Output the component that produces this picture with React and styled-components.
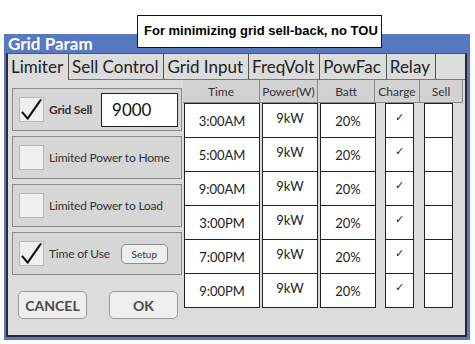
import React from "react";
import styled, { createGlobalStyle } from "styled-components";

const GlobalStyle = createGlobalStyle`
  html, body { margin: 0; padding: 0; background: #ffffff; }
  body { font-family: Lato, "Open Sans", sans-serif; }
`;

const tabs = ["Limiter", "Sell Control", "Grid Input", "FreqVolt", "PowFac", "Relay", ""];

const rows = [
  { time: "3:00AM", power: "9kW", batt: "20%" },
  { time: "5:00AM", power: "9kW", batt: "20%" },
  { time: "9:00AM", power: "9kW", batt: "20%" },
  { time: "3:00PM", power: "9kW", batt: "20%" },
  { time: "7:00PM", power: "9kW", batt: "20%" },
  { time: "9:00PM", power: "9kW", batt: "20%" },
];

const Tick = () => (
  <svg width="24" height="24" viewBox="0 0 24 24">
    <polyline points="2,15 8,22 22,2" fill="none" stroke="#111" strokeWidth="2.2" />
  </svg>
);

const App = () => {
  return (
    <Page>
      <GlobalStyle />
      <Note>For minimizing grid sell-back, no TOU</Note>
      <Window>
        <TitleBar>Grid Param</TitleBar>
        <Content>
          <TabRow>
            {tabs.map((t, i) => (
              <Tab key={i} active={i === 0} grow={t === ""}>
                {t}
              </Tab>
            ))}
          </TabRow>
          <Body>
            <LeftCol>
              <Group>
                <CheckBox><Tick /></CheckBox>
                <SmallLabel bold>Grid Sell</SmallLabel>
                <ValueBox>9000</ValueBox>
              </Group>
              <Group>
                <CheckBox />
                <SmallLabel>Limited Power to Home</SmallLabel>
              </Group>
              <Group>
                <CheckBox />
                <SmallLabel>Limited Power to Load</SmallLabel>
              </Group>
              <Group>
                <CheckBox><Tick /></CheckBox>
                <SmallLabel>Time of Use</SmallLabel>
                <SetupButton>Setup</SetupButton>
              </Group>
              <ButtonRow>
                <DialogButton>CANCEL</DialogButton>
                <DialogButton>OK</DialogButton>
              </ButtonRow>
            </LeftCol>
            <Table>
              <Head>Time</Head>
              <Head>Power(W)</Head>
              <Head>Batt</Head>
              <Head>Charge</Head>
              <Head>Sell</Head>
              {rows.map((r, i) => (
                <React.Fragment key={i}>
                  <Cell kind="time">{r.time}</Cell>
                  <Cell kind="power">{r.power}</Cell>
                  <Cell kind="batt">{r.batt}</Cell>
                  <Cell kind="charge">✓</Cell>
                  <Cell kind="sell" />
                </React.Fragment>
              ))}
            </Table>
          </Body>
        </Content>
      </Window>
    </Page>
  );
};

const Page = styled.div`
  position: relative;
  width: 475px;
  height: 344px;
  padding: 34px 0 0 4px;
  box-sizing: border-box;
`;

const Note = styled.div`
  position: absolute;
  left: 137px;
  top: 15px;
  width: 245px;
  height: 33px;
  box-sizing: border-box;
  background: #ffffff;
  border: 1.5px solid #111;
  font-family: "Liberation Sans", Arial, sans-serif;
  font-weight: bold;
  font-size: 13px;
  color: #000;
  white-space: nowrap;
  display: flex;
  align-items: center;
  padding: 0 0 2px 6px;
  z-index: 2;
`;

const Window = styled.div`
  width: 466px;
  height: 306px;
  background: #5878c2;
  display: flex;
  flex-direction: column;
`;

const TitleBar = styled.div`
  height: 19px;
  padding-left: 4px;
  color: #ffffff;
  font-weight: bold;
  font-size: 17px;
  line-height: 20px;
`;

const Content = styled.div`
  flex: 1;
  margin: 0 3px 3px 2px;
  background: #dcdcdc;
  border: 2px solid #2a2a2a;
  border-top: 1px solid #555;
  display: flex;
  flex-direction: column;
`;

const TabRow = styled.div`
  display: flex;
  height: 26px;
`;

const Tab = styled.div`
  flex: ${(p) => (p.grow ? 1 : "none")};
  padding: 0 5px 0 3px;
  font-size: 17px;
  line-height: 25px;
  color: #222;
  border-right: 1px solid #555;
  border-bottom: ${(p) => (p.active ? "none" : "1px solid #777")};
  &:last-child { border-right: none; }
`;

const Body = styled.div`
  display: flex;
  padding: 0 0 0 4px;
`;

const LeftCol = styled.div`
  width: 170px;
  padding-top: 8px;
  display: flex;
  flex-direction: column;
  gap: 5px;
`;

const Group = styled.div`
  height: 43px;
  box-sizing: border-box;
  border: 1px solid #8a8a8a;
  background: #d6d6d6;
  display: flex;
  align-items: center;
  padding-left: 6px;
  gap: 5px;
`;

const CheckBox = styled.div`
  width: 25px;
  height: 25px;
  box-sizing: border-box;
  background: #efefef;
  border: 1px solid #b8b8b8;
  display: flex;
  align-items: flex-end;
  justify-content: center;
`;

const SmallLabel = styled.span`
  font-size: 12px;
  font-weight: ${(p) => (p.bold ? "bold" : "normal")};
  color: #333;
  letter-spacing: -0.2px;
  white-space: nowrap;
`;

const ValueBox = styled.div`
  margin-left: 4px;
  width: 77px;
  height: 34px;
  box-sizing: border-box;
  background: #fff;
  border: 1.5px solid #222;
  font-size: 17px;
  color: #111;
  padding: 5px 0 0 10px;
`;

const SetupButton = styled.div`
  margin-left: 6px;
  width: 47px;
  height: 20px;
  box-sizing: border-box;
  border: 1px solid #8a8a8a;
  border-radius: 5px;
  background: #efefef;
  font-size: 10px;
  color: #333;
  display: flex;
  align-items: center;
  justify-content: center;
`;

const ButtonRow = styled.div`
  display: flex;
  justify-content: space-between;
  padding: 11px 4px 0 6px;
`;

const DialogButton = styled.div`
  width: 69px;
  height: 28px;
  box-sizing: border-box;
  border: 1px solid #9a9a9a;
  border-radius: 5px;
  background: #efefef;
  font-size: 14px;
  font-weight: bold;
  color: #4a4a4a;
  display: flex;
  align-items: center;
  justify-content: center;
`;

const Table = styled.div`
  display: grid;
  grid-template-columns: 77px 58px 57px 45px 43px;
  grid-template-rows: 23px repeat(6, 34px);
  align-content: start;
  margin-left: 1px;
`;

const Head = styled.div`
  background: #d2d2d2;
  border-right: 1px solid #888;
  border-bottom: 1px solid #888;
  font-size: 12px;
  color: #333;
  display: flex;
  align-items: center;
  justify-content: center;
`;

const cellBox = {
  time: "margin: 0 0 0 1px;",
  power: "margin: 0 0 0 2px;",
  batt: "margin: 0 -1px 0 2px;",
  charge: "margin: 0 6px 0 10px;",
  sell: "margin: 0 10px 0 4px;",
};

const Cell = styled.div`
  ${(p) => cellBox[p.kind]}
  background: #fff;
  border: 1.5px solid #222;
  margin-bottom: -1px;
  color: #222;
  display: flex;
  align-items: center;
  justify-content: center;
  padding-bottom: ${(p) => (p.kind === "power" || p.kind === "charge" ? "6px" : "0")};
  box-sizing: border-box;
  font-family: ${(p) => (p.kind === "charge" ? '"DejaVu Sans", sans-serif' : "inherit")};
  font-size: ${(p) => (p.kind === "charge" ? "11px" : "13px")};
`;

export default App;
